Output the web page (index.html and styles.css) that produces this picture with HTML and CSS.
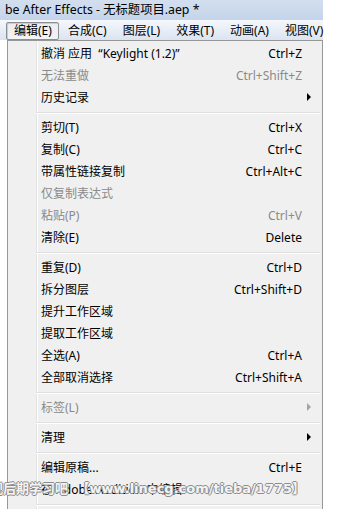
FILE: index.html
```html
<!DOCTYPE html>
<html>
<head>
    <meta charset="utf-8">
    <title>编辑菜单</title>
    <link rel="stylesheet" href="styles.css">
</head>
<body>
    <div class="window">
        <div class="titlebar">be After Effects - 无标题项目.aep *</div>
        <div class="menubar">
            <span class="menubar-item pressed">编辑(E)</span>
            <span class="menubar-item">合成(C)</span>
            <span class="menubar-item">图层(L)</span>
            <span class="menubar-item">效果(T)</span>
            <span class="menubar-item">动画(A)</span>
            <span class="menubar-item">视图(V)</span>
        </div>
        <div class="menu">
            <div class="row"><span class="label">撤消 应用 &nbsp;“Keylight (1.2)”</span><span class="key">Ctrl+Z</span><span class="sub"></span></div>
            <div class="row disabled"><span class="label">无法重做</span><span class="key">Ctrl+Shift+Z</span><span class="sub"></span></div>
            <div class="row"><span class="label">历史记录</span><span class="key"></span><span class="sub"><i class="arrow"></i></span></div>
            <div class="sep"></div>
            <div class="row"><span class="label">剪切(T)</span><span class="key">Ctrl+X</span><span class="sub"></span></div>
            <div class="row"><span class="label">复制(C)</span><span class="key">Ctrl+C</span><span class="sub"></span></div>
            <div class="row"><span class="label">带属性链接复制</span><span class="key">Ctrl+Alt+C</span><span class="sub"></span></div>
            <div class="row disabled"><span class="label">仅复制表达式</span><span class="key"></span><span class="sub"></span></div>
            <div class="row disabled"><span class="label">粘贴(P)</span><span class="key">Ctrl+V</span><span class="sub"></span></div>
            <div class="row"><span class="label">清除(E)</span><span class="key">Delete</span><span class="sub"></span></div>
            <div class="sep"></div>
            <div class="row"><span class="label">重复(D)</span><span class="key">Ctrl+D</span><span class="sub"></span></div>
            <div class="row"><span class="label">拆分图层</span><span class="key">Ctrl+Shift+D</span><span class="sub"></span></div>
            <div class="row"><span class="label">提升工作区域</span><span class="key"></span><span class="sub"></span></div>
            <div class="row"><span class="label">提取工作区域</span><span class="key"></span><span class="sub"></span></div>
            <div class="row"><span class="label">全选(A)</span><span class="key">Ctrl+A</span><span class="sub"></span></div>
            <div class="row"><span class="label">全部取消选择</span><span class="key">Ctrl+Shift+A</span><span class="sub"></span></div>
            <div class="sep"></div>
            <div class="row disabled"><span class="label">标签(L)</span><span class="key"></span><span class="sub"><i class="arrow"></i></span></div>
            <div class="sep"></div>
            <div class="row"><span class="label">清理</span><span class="key"></span><span class="sub"><i class="arrow"></i></span></div>
            <div class="sep"></div>
            <div class="row"><span class="label">编辑原稿...</span><span class="key">Ctrl+E</span><span class="sub"></span></div>
            <div class="row"><span class="label">在 Adobe Audition 中编辑</span><span class="key"></span><span class="sub"></span></div>
            <div class="sep"></div>
            <div class="row"><span class="label">&nbsp;</span><span class="key"></span><span class="sub"></span></div>
        </div>
        <div class="watermark">视后期学习吧 <span class="url">【www.linecg.com/tieba/1775】</span></div>
    </div>
</body>
</html>
```

FILE: styles.css
```css
body{
    margin: 0;
    background: #fff;
    font-family: "Noto Sans", "Noto Sans CJK SC", sans-serif;
    font-size: 12px;
    color: #000;
}

.window{
    position: relative;
    width: 342px;
    height: 509px;
    overflow: hidden;
}

.titlebar{
    width: 318px;
    height: 20px;
    padding-left: 5px;
    line-height: 19px;
    font-size: 12.3px;
    white-space: nowrap;
    background: linear-gradient(#d3dfee, #c4d4ea);
}

.menubar{
    display: flex;
    width: 317px;
    height: 20px;
    padding-left: 6px;
    background: linear-gradient(#f5f8fc, #dbe4f1);
}

.menubar-item{
    height: 16px;
    margin: 2px 1px 0 0;
    padding: 0 6px 0 7px;
    border: 1px solid transparent;
    border-radius: 2px;
    line-height: 15px;
    white-space: nowrap;
}

.menubar-item.pressed{
    border-color: #8e8f8f;
    background: linear-gradient(#e9ecf0, #f2f4f7);
    box-shadow: inset 1px 1px 0 #c9ccd1;
}

.menu{
    width: 314px;
    margin-left: 7px;
    padding: 1px 0 0;
    border: 1px solid #979797;
    background: #f0f0f0 linear-gradient(to right, transparent 28px, #e2e3e3 28px, #e2e3e3 29px, #fff 29px, #fff 30px, transparent 30px);
}

.row{
    display: flex;
    align-items: center;
    height: 22px;
    padding-left: 33px;
    white-space: nowrap;
}

.row .label{
    flex: 1;
}

.row .key{
    text-align: right;
}

.row .sub{
    display: flex;
    align-items: center;
    width: 20px;
    height: 22px;
}

.arrow{
    display: block;
    margin-left: 5px;
    border-left: 4px solid #000;
    border-top: 4px solid transparent;
    border-bottom: 4px solid transparent;
}

.row.disabled{
    color: #8a8a8a;
}

.row.disabled .arrow{
    border-left-color: #a3a3a3;
}

.sep{
    height: 8px;
    margin: 0 2px 0 28px;
    background: linear-gradient(transparent 4px, #e0e0e0 4px, #e0e0e0 5px, #fff 5px, #fff 6px, transparent 6px);
}

.watermark{
    position: absolute;
    left: -10px;
    top: 480px;
    font-family: "DejaVu Sans", "Noto Sans CJK SC", sans-serif;
    font-weight: bold;
    font-size: 13px;
    line-height: 18px;
    color: rgba(255, 255, 255, 0.92);
    white-space: nowrap;
    text-shadow: 1px 0 #8c8c8c, -1px 0 #8c8c8c, 0 1px #8c8c8c, 0 -1px #8c8c8c;
}

.watermark .url{
    margin-left: 4px;
    font-size: 13px;
}
```
